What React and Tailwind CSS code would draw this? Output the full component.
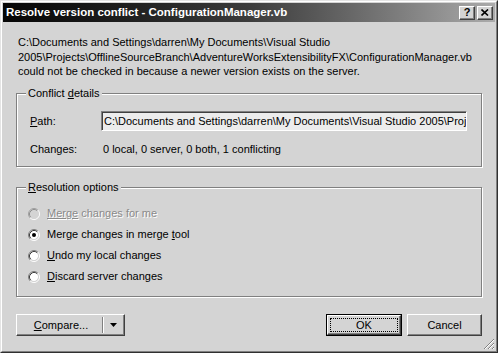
import React from 'react';

function Radio({ checked, disabled }) {
  const dark = disabled ? '#a0a0a0' : '#808080';
  const darker = disabled ? '#909090' : '#404040';
  return (
    <svg width="12" height="12" viewBox="0 0 12 12" className="shrink-0">
      <circle cx="6" cy="6" r="4.2" fill={disabled ? '#d4d4d4' : '#ffffff'} />
      <path d="M2.11 9.89 A5.5 5.5 0 0 1 9.89 2.11" fill="none" stroke={dark} strokeWidth="1" />
      <path d="M2.82 9.18 A4.5 4.5 0 0 1 9.18 2.82" fill="none" stroke={darker} strokeWidth="1" />
      <path d="M9.89 2.11 A5.5 5.5 0 0 1 2.11 9.89" fill="none" stroke="#ffffff" strokeWidth="1" />
      <path d="M9.18 2.82 A4.5 4.5 0 0 1 2.82 9.18" fill="none" stroke="#d4d4d4" strokeWidth="1" />
      {checked && <circle cx="6" cy="6" r="2" fill="#000" />}
    </svg>
  );
}

function Group({ title, className, children }) {
  return (
    <div className={`relative border border-[#808080] shadow-[inset_1px_1px_0_#ffffff,1px_1px_0_#ffffff] ${className}`}>
      <span className="absolute left-[9px] -top-[7px] bg-[#d4d4d4] px-[2px] leading-[13px]">{title}</span>
      {children}
    </div>
  );
}

const raised =
  'border border-t-white border-l-white border-r-[#404040] border-b-[#404040] shadow-[inset_-1px_-1px_0_#808080]';

export default function App() {
  return (
    <div className="w-[498px] h-[353px] bg-[#d4d4d4] font-['Liberation_Sans',Arial,sans-serif] text-[11px] text-black border border-t-[#e4e4e4] border-l-[#e4e4e4] border-r-[#303030] border-b-[#303030]">
      <div className="h-full border border-t-white border-l-white border-r-[#808080] border-b-[#808080] p-[1px] flex flex-col">
        {/* title bar */}
        <div className="h-[19px] flex items-center pl-[3px] pr-[2px] bg-gradient-to-r from-[#060606] via-[#3c3c3c] to-[#ababab]">
          <span className="flex-1 font-bold text-white text-[11.5px] leading-none">
            Resolve version conflict - ConfigurationManager.vb
          </span>
          <div className={`w-[16px] h-[14px] bg-[#d4d4d4] ${raised} flex items-center justify-center font-bold text-[11px] leading-none`}>
            ?
          </div>
          <div className={`ml-[2px] w-[16px] h-[14px] bg-[#d4d4d4] ${raised} flex items-center justify-center`}>
            <svg width="8" height="7" viewBox="0 0 8 7">
              <path d="M0.5 0.5 L7 6.5 M7 0.5 L0.5 6.5" stroke="#000" strokeWidth="1.6" />
            </svg>
          </div>
        </div>

        {/* body */}
        <div className="flex-1 px-[13px] pt-[13px] relative">
          <p className="h-[44px] pl-[2px] leading-[14.5px]">
            C:\Documents and Settings\darren\My Documents\Visual Studio
            <br />
            2005\Projects\OfflineSourceBranch\AdventureWorksExtensibilityFX\ConfigurationManager.vb
            <br />
            could not be checked in because a newer version exists on the server.
          </p>

          <Group
            title={<>Conflict <u>d</u>etails</>}
            className="mt-[14px] w-[466px] h-[74px] pt-[17px] pl-[13px]"
          >
            <div className="flex items-center h-[20px]">
              <span className="w-[71px]"><u>P</u>ath:</span>
              <div className="w-[366px] h-[20px] overflow-hidden whitespace-nowrap bg-[#ececec] border border-t-[#808080] border-l-[#808080] border-r-white border-b-white shadow-[inset_1px_1px_0_#404040] pl-[2px] flex items-center">
                C:\Documents and Settings\darren\My Documents\Visual Studio 2005\Projects\OfflineSourceBranch
              </div>
            </div>
            <div className="flex items-center h-[14px] mt-[11px]">
              <span className="w-[71px]">Changes:</span>
              <span className="pl-[2px]">0 local, 0 server, 0 both, 1 conflicting</span>
            </div>
          </Group>

          <Group
            title={<><u>R</u>esolution options</>}
            className="mt-[20px] w-[466px] h-[110px] pt-[15px] pl-[11px]"
          >
            <div className="flex items-center h-[21px] gap-[7px] text-[#8a8a8a] [text-shadow:1px_1px_0_#ffffff]">
              <Radio disabled />
              <span><u>Merge</u> changes for me</span>
            </div>
            <div className="flex items-center h-[21px] gap-[7px]">
              <Radio checked />
              <span>Merge changes in merge <u>t</u>ool</span>
            </div>
            <div className="flex items-center h-[21px] gap-[7px]">
              <Radio />
              <span><u>U</u>ndo my local changes</span>
            </div>
            <div className="flex items-center h-[21px] gap-[7px]">
              <Radio />
              <span><u>D</u>iscard server changes</span>
            </div>
          </Group>

          {/* buttons */}
          <div className="mt-[17px] flex items-center w-[466px]">
            <div className={`w-[109px] h-[22px] flex ${raised}`}>
              <div className="w-[85px] flex items-center justify-center pl-[3px]">
                <span><u>C</u>ompare...</span>
              </div>
              <div className="w-[2px] my-[2px] border-l border-l-[#808080] border-r border-r-white" />
              <div className="flex-1 flex items-center justify-center pr-[1px]">
                <svg width="7" height="4" viewBox="0 0 7 4">
                  <path d="M0 0 H7 L3.5 4 Z" fill="#000" />
                </svg>
              </div>
            </div>
            <div className="flex-1" />
            <div className="w-[76px] h-[22px] border border-black">
              <div className="h-full border border-t-white border-l-white border-r-[#404040] border-b-[#404040] shadow-[inset_-1px_-1px_0_#808080] p-[2px]">
                <div className="h-full border border-dotted border-black flex items-center justify-center">
                  OK
                </div>
              </div>
            </div>
            <div className={`ml-[5px] w-[75px] h-[22px] flex items-center justify-center ${raised}`}>
              Cancel
            </div>
          </div>

          {/* resize grip */}
          <svg width="12" height="12" viewBox="0 0 12 12" className="absolute right-0 bottom-0">
            <path d="M11 1 L1 11 M11 5 L5 11 M11 9 L9 11" stroke="#808080" strokeWidth="1" />
            <path d="M11 2 L2 11 M11 6 L6 11 M11 10 L10 11" stroke="#ffffff" strokeWidth="1" />
          </svg>
        </div>
      </div>
    </div>
  );
}
